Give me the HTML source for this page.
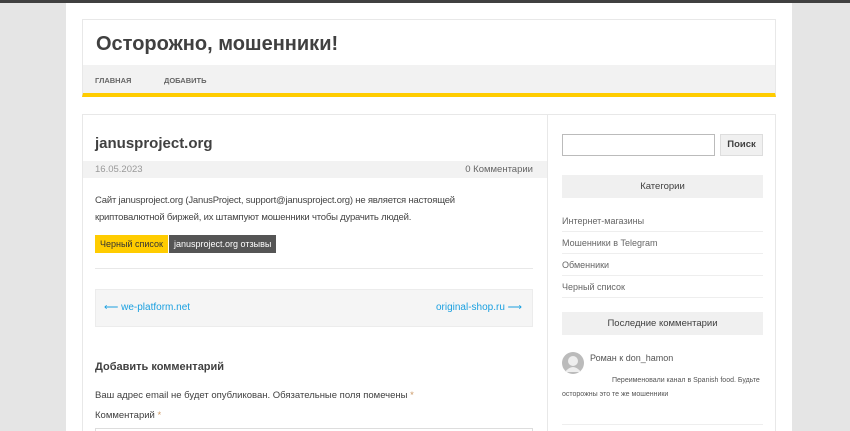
<!DOCTYPE html>
<html><head><meta charset="utf-8"><style>
*{margin:0;padding:0;box-sizing:border-box}
html,body{width:850px;height:431px;overflow:hidden}
body{background:#e5e5e5;font-family:"Liberation Sans","Noto Sans CJK SC",sans-serif;color:#404040;position:relative}
.top{position:absolute;left:0;top:0;width:850px;height:3px;background:#404040}
.wrap{position:absolute;left:66px;top:3px;width:726px;height:428px;background:#fff;overflow:hidden}
.hdr{position:absolute;left:16px;top:16px;width:694px;height:78px;border:1px solid #e8e8e8;border-bottom:none}
.hdr h1{position:absolute;left:13px;top:13px;font-size:20px;font-weight:bold;color:#404040}
.nav{position:absolute;left:16px;top:62px;width:694px;height:32px;background:#f2f2f2;border-bottom:4px solid #fc0;border-left:1px solid #e8e8e8;border-right:1px solid #e8e8e8}
.nav span{position:absolute;top:11px;font-size:7.5px;font-weight:bold;color:#666}
.main{position:absolute;left:16px;top:111px;width:694px;height:330px;border:1px solid #e8e8e8}
.side{position:absolute;left:464px;top:0;width:1px;height:330px;background:#e8e8e8}
.a{position:absolute;white-space:nowrap}
</style></head><body>
<div class="top"></div>
<div class="wrap">
<div class="hdr"><h1>Осторожно, мошенники!</h1></div>
<div class="nav"><span style="left:12px">ГЛАВНАЯ</span><span style="left:81px">ДОБАВИТЬ</span></div>
<div class="main">
<div class="side"></div>
<div class="a" style="left:12px;top:20px;font-size:15px;font-weight:bold">janusproject.org</div>
<div class="a" style="left:0;top:46px;width:464px;height:17px;background:#f2f2f2"></div>
<div class="a" style="left:12px;top:49px;font-size:9.5px;color:#999">16.05.2023</div>
<div class="a" style="right:242px;top:49px;font-size:9.5px;color:#666">0 Комментарии</div>
<div class="a" style="left:12px;top:77px;font-size:9.5px;line-height:17px;color:#444;letter-spacing:-0.2px">Сайт janusproject.org (JanusProject, support@janusproject.org) не является настоящей<br>криптовалютной биржей, их штампуют мошенники чтобы дурачить людей.</div>
<div class="a" style="left:12px;top:120px;height:18px;padding:4px 5px;background:#fc0;font-size:9px;color:#333">Черный список</div>
<div class="a" style="left:86px;top:120px;height:18px;padding:4px 5px;background:#555;font-size:9px;color:#fff">janusproject.org отзывы</div>
<div class="a" style="left:12px;top:153px;width:438px;height:1px;background:#e8e8e8"></div>
<div class="a" style="left:12px;top:174px;width:438px;height:38px;background:#f5f5f5;border:1px solid #ececec"></div>
<div class="a" style="left:21px;top:187px;font-size:10px;color:#1aa0e0">⟵ we-platform.net</div>
<div class="a" style="right:253px;top:187px;font-size:10px;color:#1aa0e0">original-shop.ru ⟶</div>
<div class="a" style="left:12px;top:246px;font-size:11px;font-weight:bold">Добавить комментарий</div>
<div class="a" style="left:12px;top:275px;font-size:9.5px">Ваш адрес email не будет опубликован. Обязательные поля помечены <span style="color:#c96">*</span></div>
<div class="a" style="left:12px;top:295px;font-size:9.5px">Комментарий <span style="color:#c96">*</span></div>
<div class="a" style="left:12px;top:313px;width:438px;height:20px;border:1px solid #ddd"></div>
<div class="a" style="left:479px;top:19px;width:153px;height:22px;border:1px solid #bbb"></div>
<div class="a" style="left:637px;top:19px;width:43px;height:22px;background:#f0f0f0;border:1px solid #ddd;font-size:9.5px;font-weight:bold;text-align:center;line-height:20px">Поиск</div>
<div class="a" style="left:479px;top:60px;width:201px;height:23px;background:#f0f0f0;font-size:9.5px;text-align:center;line-height:23px">Категории</div>
<div class="a" style="left:479px;top:101px;font-size:9px;color:#666">Интернет-магазины</div>
<div class="a" style="left:479px;top:116px;width:201px;height:1px;background:#eee"></div>
<div class="a" style="left:479px;top:123px;font-size:9px;color:#666">Мошенники в Telegram</div>
<div class="a" style="left:479px;top:138px;width:201px;height:1px;background:#eee"></div>
<div class="a" style="left:479px;top:145px;font-size:9px;color:#666">Обменники</div>
<div class="a" style="left:479px;top:160px;width:201px;height:1px;background:#eee"></div>
<div class="a" style="left:479px;top:167px;font-size:9px;color:#666">Черный список</div>
<div class="a" style="left:479px;top:182px;width:201px;height:1px;background:#eee"></div>
<div class="a" style="left:479px;top:197px;width:201px;height:23px;background:#f0f0f0;font-size:9.5px;text-align:center;line-height:23px">Последние комментарии</div>
<svg class="a" style="left:479px;top:237px" width="22" height="22"><circle cx="11" cy="11" r="11" fill="#bbb"/><circle cx="11" cy="9" r="5" fill="#eee"/><path d="M3 20 Q11 10 19 20Z" fill="#eee"/></svg>
<div class="a" style="left:507px;top:238px;font-size:9px;color:#555">Роман к don_hamon</div>
<div class="a" style="left:529px;top:262px;font-size:7px;color:#555">Переименовали канал в Spanish food. Будьте</div>
<div class="a" style="left:479px;top:276px;font-size:7px;color:#555">осторожны это те же мошенники</div>
<div class="a" style="left:479px;top:309px;width:201px;height:1px;background:#eee"></div>
</div>
</div>
</body></html>
